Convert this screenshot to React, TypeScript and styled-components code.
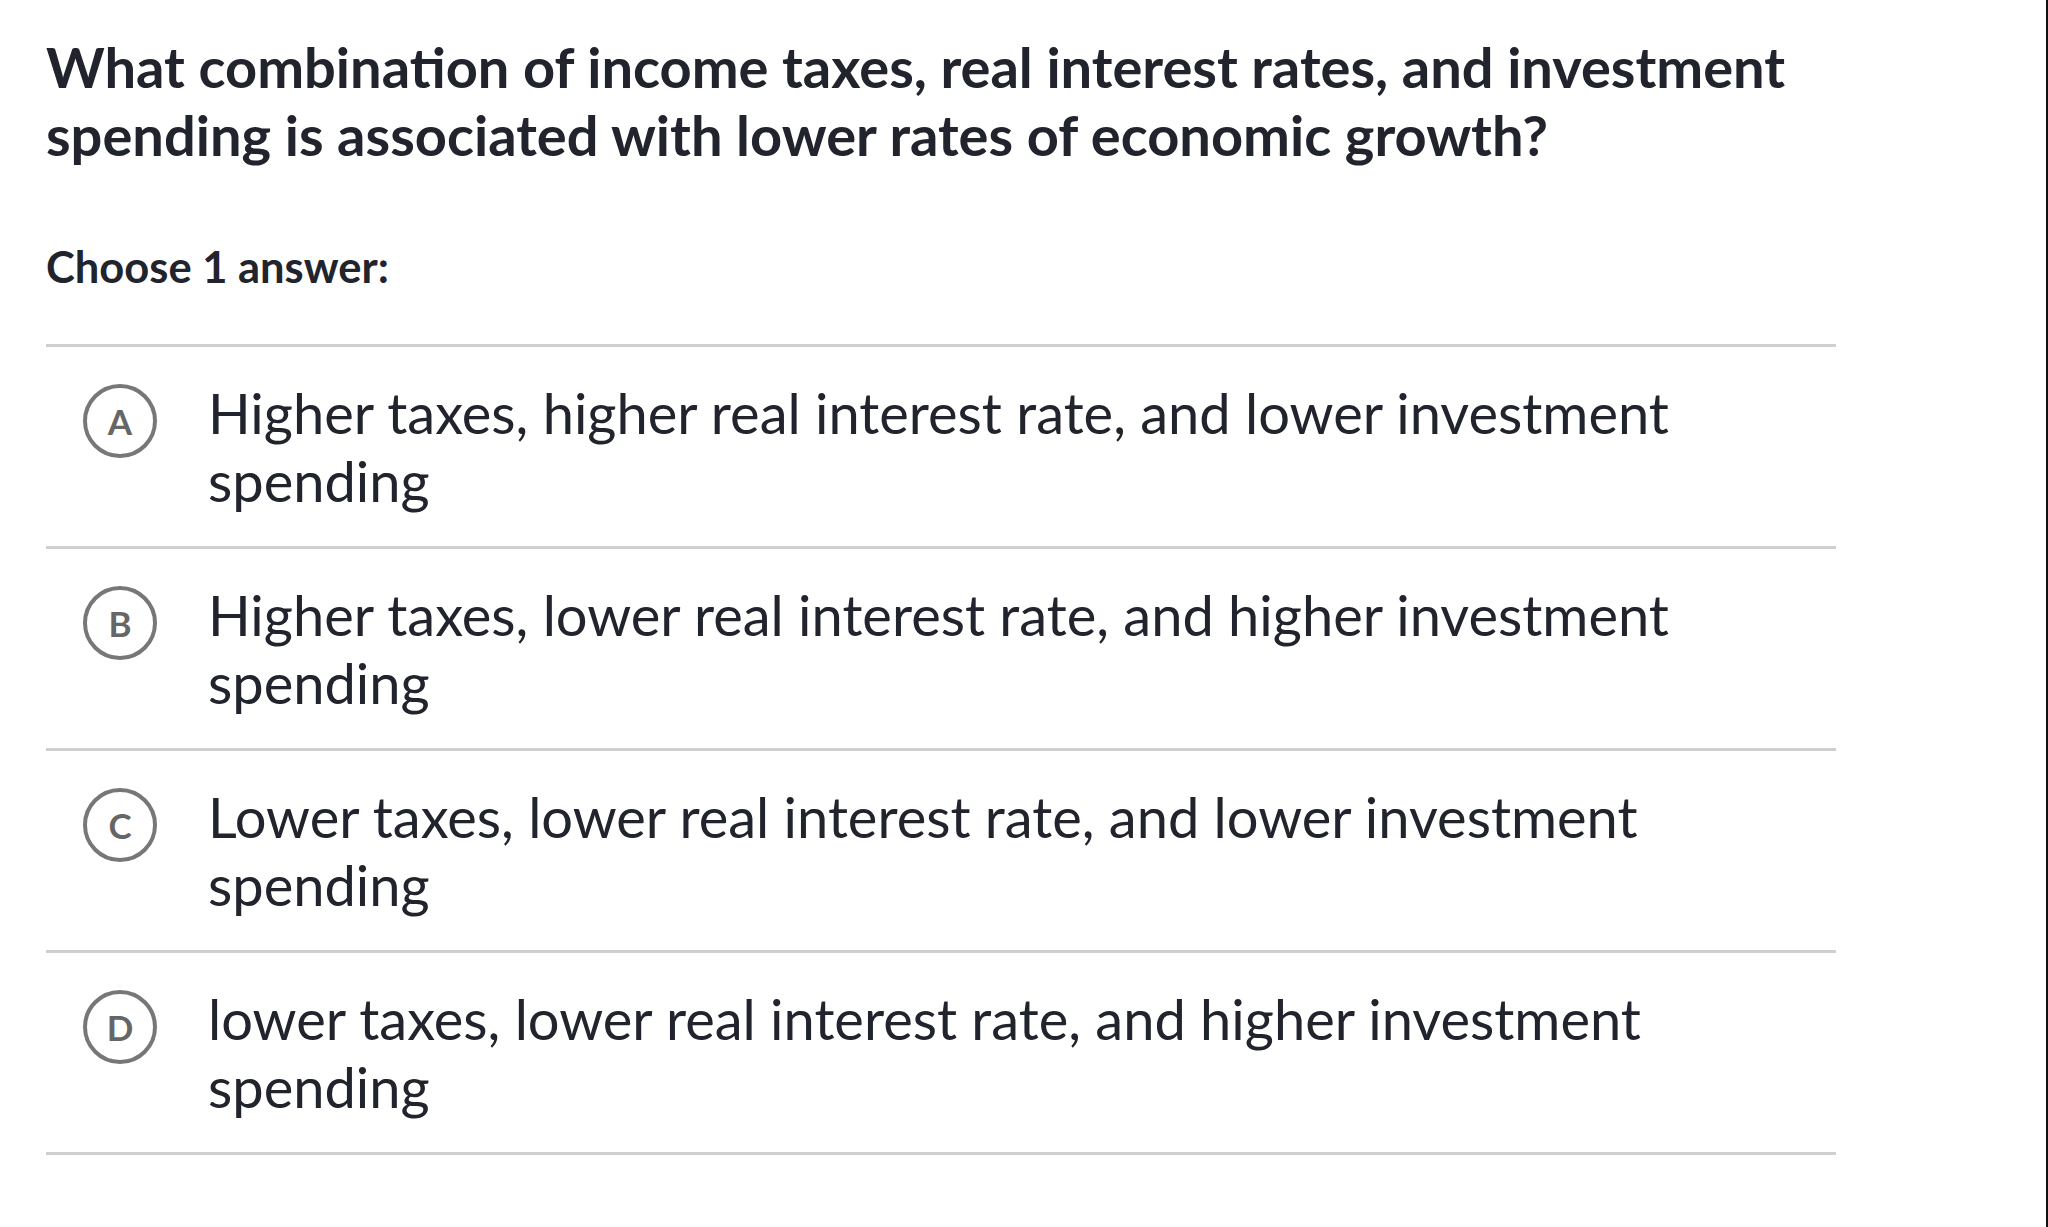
import React from 'react';
import styled, { createGlobalStyle } from 'styled-components';

const GlobalStyle = createGlobalStyle`
  html, body {
    margin: 0;
    padding: 0;
    background: #ffffff;
  }
  body {
    font-family: Lato, 'Open Sans', 'Liberation Sans', sans-serif;
    color: #21242c;
  }
`;

const Page = styled.div`
  box-sizing: border-box;
  min-height: 1227px;
  width: 2048px;
  padding: 33px 0 0 46px;
  border-right: 2px solid #111111;
`;

const Question = styled.div`
  width: 1790px;
  font-size: 56px;
  font-weight: 700;
  line-height: 68px;
  color: #21242c;
`;

const Prompt = styled.div`
  margin-top: 72px;
  font-size: 43.5px;
  font-weight: 700;
  line-height: 50px;
  color: #21242c;
`;

const Choices = styled.ul`
  list-style: none;
  margin: 53px 0 0 0;
  padding: 0;
  width: 1790px;
  border-top: 3px solid #cfcfcf;
`;

const Choice = styled.li`
  display: flex;
  align-items: flex-start;
  box-sizing: border-box;
  height: 202px;
  padding: 32px 0 0 37px;
  border-bottom: 3px solid #cfcfcf;
`;

const Bubble = styled.span`
  flex: none;
  box-sizing: border-box;
  width: 74px;
  height: 74px;
  margin-top: 5px;
  border: 4px solid #777777;
  border-radius: 50%;
  display: flex;
  align-items: center;
  justify-content: center;
  font-size: 35px;
  font-weight: 700;
  color: #666666;
`;

const ChoiceText = styled.span`
  margin-left: 51px;
  font-size: 56px;
  line-height: 68px;
  color: #21242c;
`;

const options = [
  { letter: 'A', text: 'Higher taxes, higher real interest rate, and lower investment' },
  { letter: 'B', text: 'Higher taxes, lower real interest rate, and higher investment' },
  { letter: 'C', text: 'Lower taxes, lower real interest rate, and lower investment' },
  { letter: 'D', text: 'lower taxes, lower real interest rate, and higher investment' },
];

export default function App() {
  return (
    <>
      <GlobalStyle />
      <Page>
        <Question>
          What combination of income taxes, real interest rates, and investment spending is
          associated with lower rates of economic growth?
        </Question>
        <Prompt>Choose 1 answer:</Prompt>
        <Choices>
          {options.map((o) => (
            <Choice key={o.letter}>
              <Bubble>{o.letter}</Bubble>
              <ChoiceText>
                {o.text}
                <br />
                spending
              </ChoiceText>
            </Choice>
          ))}
        </Choices>
      </Page>
    </>
  );
}
